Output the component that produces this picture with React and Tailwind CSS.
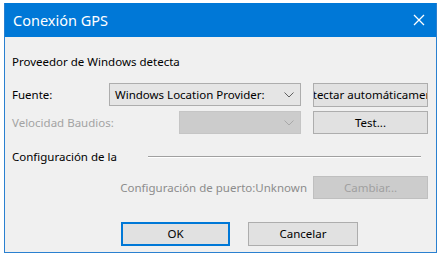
export default function App() {
  const font = { fontFamily: '"Noto Sans", "Open Sans", sans-serif' };
  return (
    <div className="w-[441px] h-[258px] bg-white pt-[3px] pl-[4px]" style={font}>
      <div className="w-[433px] h-[250px] border border-[#2a80d0] border-t-0 flex flex-col bg-[#f0f0f0]">
        <div className="h-[34px] bg-[#0078d7] flex items-center justify-between pl-[8px] pr-[11px] shrink-0">
          <span className="text-white text-[14.5px] leading-none">Conexión GPS</span>
          <svg width="12" height="12" viewBox="0 0 12 12">
            <path d="M1 1L11 11M11 1L1 11" stroke="white" strokeWidth="1.3" fill="none" />
          </svg>
        </div>

        <div className="flex flex-col pl-[7px] text-[11.5px] text-black">
          <div className="mt-[17px] leading-[16px]">Proveedor de Windows detecta</div>

          <div className="mt-[13px] flex items-center h-[23px]">
            <span className="w-[97px]">Fuente:</span>
            <div className="w-[192px] h-[23px] bg-[#e5e5e5] border border-[#adadad] flex items-center justify-between pl-[5px] pr-[6px]">
              <span>Windows Location Provider:</span>
              <Chevron color="#606060" />
            </div>
            <div className="ml-[12px] w-[115px] h-[24px] bg-[#e1e1e1] border border-[#adadad] flex items-center justify-center overflow-hidden">
              <span className="whitespace-nowrap shrink-0">Detectar automáticamente</span>
            </div>
          </div>

          <div className="mt-[5px] flex items-center h-[23px]">
            <span className="w-[167px] text-[#a3a3a3]">Velocidad Baudios:</span>
            <div className="w-[122px] h-[23px] bg-[#cccccc] border border-[#c5c5c5] flex items-center justify-end pr-[6px]">
              <Chevron color="#a8a8a8" />
            </div>
            <div className="ml-[12px] w-[115px] h-[23px] bg-[#e1e1e1] border border-[#adadad] flex items-center justify-center">
              Test...
            </div>
          </div>

          <div className="mt-[12px] flex items-center h-[22px]">
            <span className="w-[136px]">Configuración de la</span>
            <div className="w-[273px] h-[2px] border-t border-[#a0a0a0] border-b border-b-white" />
          </div>

          <div className="mt-[8px] flex items-center h-[23px]">
            <span className="w-[301px] pr-[6px] text-right text-[#8c8c8c]">Configuración de puerto:Unknown</span>
            <div className="w-[115px] h-[23px] bg-[#cccccc] border border-[#bfbfbf] flex items-center justify-center text-[#a0a0a0]">
              Cambiar...
            </div>
          </div>

          <div className="mt-[23px] flex">
            <div className="ml-[109px] w-[109px] h-[24px] bg-[#e1e1e1] border-2 border-[#0078d7] flex items-center justify-center">
              OK
            </div>
            <div className="ml-[18px] w-[110px] h-[24px] bg-[#e1e1e1] border border-[#adadad] flex items-center justify-center">
              Cancelar
            </div>
          </div>
        </div>
      </div>
    </div>
  );
}

function Chevron({ color }) {
  return (
    <svg width="10" height="6" viewBox="0 0 10 6">
      <path d="M0.5 0.5L5 5L9.5 0.5" stroke={color} strokeWidth="1" fill="none" />
    </svg>
  );
}
